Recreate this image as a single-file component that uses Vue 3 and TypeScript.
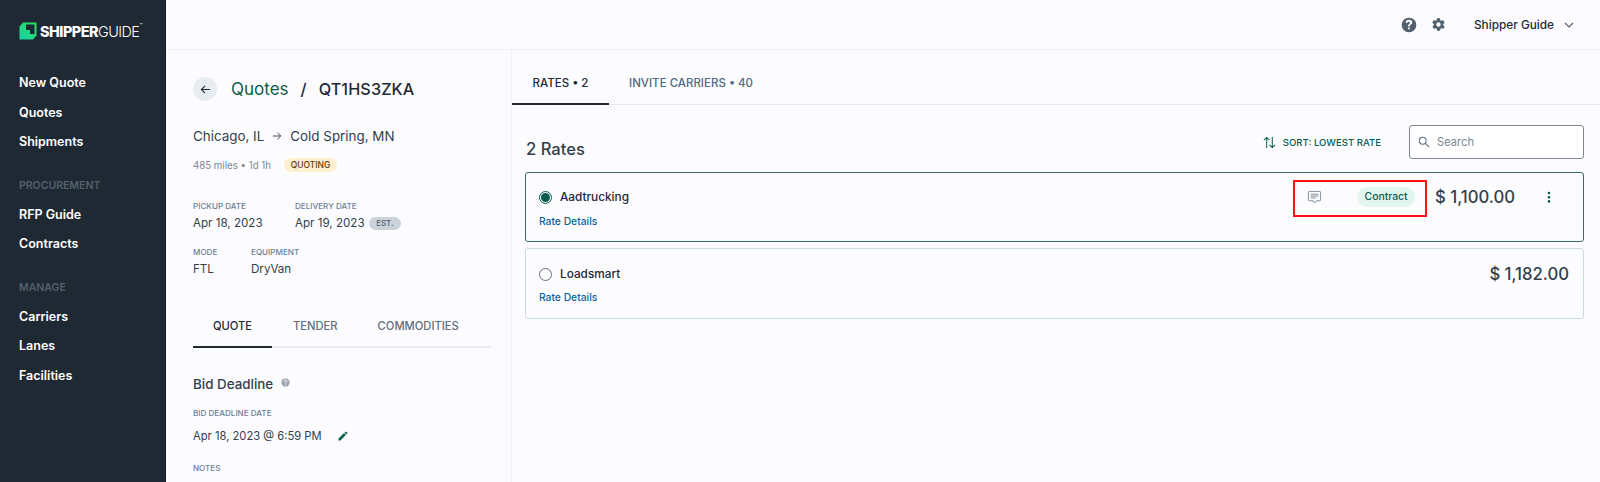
<script setup lang="ts">
const topNav: string[] = ['New Quote', 'Quotes', 'Shipments']
const procurement: string[] = ['RFP Guide', 'Contracts']
const manage: string[] = ['Carriers', 'Lanes', 'Facilities']
</script>

<template>
  <div class="app">
    <aside class="sidebar">
      <div class="logo">
        <svg class="mark" viewBox="0 0 18 18" width="18" height="18">
          <defs>
            <linearGradient id="lg" x1="0" y1="1" x2="1" y2="0">
              <stop offset="0" stop-color="#17cfa6" />
              <stop offset="1" stop-color="#2fe05a" />
            </linearGradient>
          </defs>
          <path fill="url(#lg)" d="M4 0.5h13.5v13l-3.5 4H0.5V4.5z" />
          <path fill="#1f2933" d="M7 2.5h8.5v9.5H11V8H7z" />
        </svg>
        <span class="wordmark"><b>SHIPPER</b>GUIDE</span><span class="tm">™</span>
      </div>
      <nav class="nav">
        <a v-for="n in topNav" :key="n" class="nav-item">{{ n }}</a>
        <div class="nav-head">PROCUREMENT</div>
        <a v-for="n in procurement" :key="n" class="nav-item">{{ n }}</a>
        <div class="nav-head">MANAGE</div>
        <a v-for="n in manage" :key="n" class="nav-item">{{ n }}</a>
      </nav>
    </aside>

    <div class="main">
      <header class="topbar">
        <svg class="ic-help" viewBox="0 0 24 24" width="16" height="16">
          <path fill="#52606d" fill-rule="evenodd" d="M12 1a11 11 0 1 0 0 22 11 11 0 0 0 0-22zm-1.3 17.5v-2.7h2.6v2.7zm4.6-7.6c-.5.7-1.1 1.1-1.6 1.5-.6.5-.9.9-.9 1.9h-2.5c0-1.8.7-2.7 1.7-3.4.6-.5 1.3-.9 1.3-1.8a1.9 1.9 0 0 0-3.8 0H7.1a4.9 4.9 0 0 1 9.8 0c0 .7-.3 1.3-1.6 1.8z" />
        </svg>
        <svg class="ic-gear" viewBox="0 0 24 24" width="15" height="15">
          <path fill="#52606d" fill-rule="evenodd" d="M19.4 13c.1-.3.1-.7.1-1s0-.7-.1-1l2.1-1.6c.2-.2.2-.4.1-.6l-2-3.5c-.1-.2-.4-.3-.6-.2l-2.5 1c-.5-.4-1.1-.7-1.7-1l-.4-2.7c0-.2-.2-.4-.5-.4h-4c-.3 0-.5.2-.5.4l-.4 2.7c-.6.3-1.2.6-1.7 1l-2.5-1c-.2-.1-.5 0-.6.2l-2 3.5c-.1.2-.1.4.1.6L4.6 11c-.1.3-.1.7-.1 1s0 .7.1 1l-2.1 1.6c-.2.2-.2.4-.1.6l2 3.5c.1.2.4.3.6.2l2.5-1c.5.4 1.1.7 1.7 1l.4 2.7c0 .2.2.4.5.4h4c.3 0 .5-.2.5-.4l.4-2.7c.6-.3 1.2-.6 1.7-1l2.5 1c.2.1.5 0 .6-.2l2-3.5c.1-.2.1-.4-.1-.6zM12 15.5a3.5 3.5 0 1 1 0-7 3.5 3.5 0 0 1 0 7z" />
        </svg>
        <span class="account">Shipper Guide</span>
        <svg class="ic-chev" viewBox="0 0 10 6" width="10" height="6">
          <path d="M1 1l4 4 4-4" fill="none" stroke="#52606d" stroke-width="1.1" />
        </svg>
      </header>

      <div class="body">
        <section class="left">
          <div class="crumbs">
            <button class="back" type="button">
              <svg viewBox="0 0 12 12" width="11" height="11">
                <path d="M11 6H1.5M5.5 2L1.5 6l4 4" fill="none" stroke="#1f2933" stroke-width="1.2" />
              </svg>
            </button>
            <span class="crumb-link">Quotes</span>
            <span class="crumb-sep">/</span>
            <span class="crumb-id">QT1HS3ZKA</span>
          </div>

          <div class="route">
            <span>Chicago, IL</span>
            <svg viewBox="0 0 12 12" width="10" height="10">
              <path d="M1 6h9.5M6.5 2l4 4-4 4" fill="none" stroke="#323f4b" stroke-width="1.1" />
            </svg>
            <span>Cold Spring, MN</span>
          </div>

          <div class="meta">
            <span class="meta-text">485 miles • 1d 1h</span>
            <span class="quoting">QUOTING</span>
          </div>

          <div class="facts dates">
            <div class="fact date1">
              <div class="label">PICKUP DATE</div>
              <div class="value">Apr 18, 2023</div>
            </div>
            <div class="fact">
              <div class="label">DELIVERY DATE</div>
              <div class="value">Apr 19, 2023 <span class="est">EST.</span></div>
            </div>
          </div>

          <div class="facts modes">
            <div class="fact mode1">
              <div class="label">MODE</div>
              <div class="value">FTL</div>
            </div>
            <div class="fact">
              <div class="label">EQUIPMENT</div>
              <div class="value">DryVan</div>
            </div>
          </div>

          <div class="subtabs">
            <span class="subtab active">QUOTE</span>
            <span class="subtab tender">TENDER</span>
            <span class="subtab comm">COMMODITIES</span>
          </div>

          <div class="bid-head">
            <span>Bid Deadline</span>
            <svg viewBox="0 0 24 24" width="9" height="9">
              <circle cx="12" cy="12" r="11" fill="#9aa5b1" />
              <path d="M8.5 9.5a3.5 3.5 0 1 1 5.2 3c-1.1.7-1.7 1.2-1.7 2.5M12 17v2.5" fill="none" stroke="#fff" stroke-width="2.4" />
            </svg>
          </div>
          <div class="label bid-label">BID DEADLINE DATE</div>
          <div class="bid-value">
            <span class="value">Apr 18, 2023 @ 6:59 PM</span>
            <svg viewBox="0 0 24 24" width="12" height="12">
              <path fill="#0b5c4f" d="M3 17.2V21h3.8L17.8 9.9l-3.7-3.7zM20.7 7a1 1 0 0 0 0-1.4l-2.3-2.3a1 1 0 0 0-1.4 0l-1.8 1.8 3.7 3.7z" />
            </svg>
          </div>
          <div class="label notes">NOTES</div>
        </section>

        <section class="right">
          <div class="tabs">
            <span class="tab active">RATES • 2</span>
            <span class="tab">INVITE CARRIERS • 40</span>
          </div>

          <div class="rates">
            <div class="rates-head">
              <h2>2 Rates</h2>
              <div class="sort">
                <svg viewBox="0 0 14 14" width="13" height="13">
                  <path d="M4 13V1.5M1 4.5l3-3 3 3M10 1v11.5M7 9.5l3 3 3-3" fill="none" stroke="#0b5c4f" stroke-width="1.1" />
                </svg>
                <span>SORT: LOWEST RATE</span>
              </div>
              <label class="search">
                <svg viewBox="0 0 14 14" width="12" height="12">
                  <circle cx="5.5" cy="5.5" r="4" fill="none" stroke="#616e7c" stroke-width="1.2" />
                  <path d="M8.6 8.6L13 13" stroke="#616e7c" stroke-width="1.2" />
                </svg>
                <input type="text" placeholder="Search" />
              </label>
            </div>

            <article class="card selected">
              <div class="card-row">
                <span class="radio on"><i></i></span>
                <span class="carrier">Aadtrucking</span>
                <svg class="ic-comment" viewBox="0 0 16 16" width="15" height="15">
                  <path d="M2.5 1.5h11a1 1 0 0 1 1 1v8a1 1 0 0 1-1 1H10l-2 2.5-1.5-2.5h-4a1 1 0 0 1-1-1v-8a1 1 0 0 1 1-1z" fill="none" stroke="#7b8794" stroke-width="1" />
                  <path d="M4 4.5h8M4 6.5h8M4 8.5h5" stroke="#7b8794" stroke-width="1" />
                </svg>
                <span class="contract">Contract</span>
                <span class="price first">$ 1,100.00</span>
                <svg class="ic-dots" viewBox="0 0 4 14" width="4" height="14">
                  <circle cx="2" cy="3" r="1.3" fill="#0b5c4f" />
                  <circle cx="2" cy="7.2" r="1.3" fill="#0b5c4f" />
                  <circle cx="2" cy="11.4" r="1.3" fill="#0b5c4f" />
                </svg>
              </div>
              <a class="details">Rate Details</a>
              <div class="annotation"></div>
            </article>

            <article class="card second">
              <div class="card-row">
                <span class="radio"></span>
                <span class="carrier">Loadsmart</span>
                <span class="price">$ 1,182.00</span>
              </div>
              <a class="details">Rate Details</a>
            </article>
          </div>
        </section>
      </div>
    </div>
  </div>
</template>

<style>
html, body { margin: 0; background: #fcfcff; }
</style>

<style scoped>
.app {
  display: flex;
  height: 482px;
  overflow: hidden;
  font-family: Inter, "Noto Sans", sans-serif;
  color: #1f2933;
  background: #fcfcff;
}
.sidebar {
  width: 165px;
  flex: none;
  background: #1f2933;
  border-right: 1px solid #14191f;
  color: #fff;
}
.logo {
  display: flex;
  align-items: center;
  height: 62px;
  padding-left: 19px;
}
.mark { flex: none; margin-right: 3px; }
.wordmark {
  font-size: 14.4px;
  font-weight: 300;
  letter-spacing: -0.5px;
  white-space: nowrap;
}
.wordmark b { font-weight: 800; }
.tm { font-size: 5px; align-self: flex-start; margin-top: 22px; }
.nav { display: flex; flex-direction: column; padding: 6px 0 0 19px; }
.nav-item {
  height: 29.5px;
  line-height: 29.5px;
  font-size: 12.5px;
  font-weight: 600;
  color: #fff;
}
.nav-head {
  height: 13px;
  line-height: 13px;
  margin: 22px 0 8px;
  font-size: 10.5px;
  font-weight: 600;
  color: #52606d;
}
.main { flex: 1; display: flex; flex-direction: column; min-width: 0; }
.topbar {
  height: 49px;
  flex: none;
  border-bottom: 1px solid #eef1f5;
  display: flex;
  align-items: center;
  justify-content: flex-end;
  padding-right: 26px;
}
.ic-help { margin-right: 14px; }
.ic-gear { margin-right: 28px; }
.account { font-size: 11.8px; font-weight: 500; margin-right: 10px; }
.body { flex: 1; display: flex; min-height: 0; }
.left {
  width: 346px;
  box-sizing: border-box;
  flex: none;
  padding: 0 20px 0 27px;
  border-right: 1px solid #eef1f5;
  overflow: hidden;
}
.crumbs { display: flex; align-items: center; height: 24px; margin-top: 27px; }
.back {
  width: 24px;
  height: 24px;
  padding: 0;
  border: 0;
  border-radius: 50%;
  background: #e8edf2;
  display: flex;
  align-items: center;
  justify-content: center;
  margin-right: 14px;
}
.crumb-link { font-size: 17px; color: #0b5c4f; }
.crumb-sep { font-size: 16.5px; margin: 0 12px 0 12px; font-weight: 500; }
.crumb-id { font-size: 16.2px; font-weight: 500; letter-spacing: 0.1px; }
.route {
  display: flex;
  align-items: center;
  gap: 8px;
  margin-top: 25px;
  height: 20px;
  font-size: 13.4px;
  color: #323f4b;
}
.meta {
  display: flex;
  align-items: center;
  margin-top: 12px;
  height: 14px;
  color: #7b8794;
}
.meta-text { width: 77px; font-size: 9.7px; white-space: nowrap; }
.quoting {
  margin-left: 14px;
  width: 53px;
  height: 14px;
  line-height: 14px;
  border-radius: 7px;
  background: #fdf0cf;
  color: #6b3a0a;
  font-size: 8.5px;
  font-weight: 500;
  text-align: center;
}
.facts { display: flex; }
.dates { margin-top: 28px; }
.modes { margin-top: 14px; }
.date1 { width: 102px; }
.mode1 { width: 58px; }
.label {
  height: 12px;
  line-height: 12px;
  font-size: 8.1px;
  font-weight: 500;
  color: #6b7f95;
  white-space: nowrap;
}
.value {
  margin-top: 3px;
  line-height: 17px;
  font-size: 11.6px;
  color: #323f4b;
  white-space: nowrap;
}
.est {
  display: inline-block;
  width: 32px;
  height: 13px;
  line-height: 13px;
  margin-left: 1px;
  border-radius: 7px;
  background: #cbd2d9;
  font-size: 8px;
  font-weight: 500;
  text-align: center;
  vertical-align: 1px;
  color: #52606d;
}
.subtabs {
  display: flex;
  margin-top: 29px;
  height: 39px;
  border-bottom: 2px solid #e8edf2;
  font-size: 11.2px;
  font-weight: 500;
  color: #616e7c;
}
.subtab { line-height: 38px; height: 39px; }
.subtab.active {
  width: 79px;
  text-align: center;
  color: #1f2933;
  border-bottom: 2px solid #1f2933;
}
.tender { margin-left: 21px; }
.comm { margin-left: 40px; }
.bid-head {
  display: flex;
  align-items: center;
  gap: 8px;
  margin-top: 26px;
  height: 20px;
  font-size: 13.4px;
  font-weight: 500;
  color: #323f4b;
}
.bid-head svg { margin-top: -3px; }
.bid-label { margin-top: 13px; }
.bid-value { display: flex; align-items: center; gap: 15px; margin-top: 8px; height: 18px; }
.bid-value .value { margin-top: 0; font-size: 11.2px; }
.notes { margin-top: 17px; }
.right { flex: 1; min-width: 0; }
.tabs {
  display: flex;
  height: 55px;
  box-sizing: border-box;
  border-bottom: 1px solid #e4e9ee;
  font-size: 11.5px;
  font-weight: 500;
  color: #52697f;
}
.tab { padding: 0 20px; line-height: 66px; height: 55px; box-sizing: border-box; white-space: nowrap; }
.tab.active {
  width: 97px;
  padding: 0;
  text-align: center;
  color: #1f2933;
  border-bottom: 2px solid #1f2933;
}
.rates { padding: 0 16px 0 13px; }
.rates-head { display: flex; align-items: center; height: 67px; }
.rates-head h2 {
  margin: 20px auto 0 1px;
  font-size: 16.6px;
  font-weight: 500;
  color: #323f4b;
}
.sort {
  display: flex;
  align-items: center;
  gap: 7px;
  margin-right: 28px;
  margin-top: 7px;
  font-size: 9.6px;
  font-weight: 500;
  color: #0b5c4f;
}
.search {
  display: flex;
  align-items: center;
  gap: 7px;
  width: 175px;
  height: 34px;
  box-sizing: border-box;
  padding-left: 8px;
  margin-top: 7px;
  border: 1px solid #7b8794;
  border-radius: 3px;
  background: #fff;
}
.search input {
  border: 0;
  outline: 0;
  width: 120px;
  padding: 0;
  font: 11.2px Inter, sans-serif;
  background: transparent;
}
.search input::placeholder { color: #7b8794; opacity: 1; }
.card {
  position: relative;
  height: 70px;
  box-sizing: border-box;
  padding: 13px 14px 0 13px;
  border: 1px solid #cbd9e3;
  border-radius: 3px;
}
.card.selected { border-color: #3d6a66; }
.second { margin-top: 6px; height: 71px; padding-top: 14px; }
.card-row { display: flex; align-items: center; height: 22px; }
.radio {
  flex: none;
  width: 13px;
  height: 13px;
  border: 1px solid #616e7c;
  border-radius: 50%;
  display: flex;
  align-items: center;
  justify-content: center;
  margin-right: 8px;
  box-sizing: border-box;
}
.radio.on { border-color: #0b5c4f; }
.radio.on i { width: 9px; height: 9px; border-radius: 50%; background: #0b5c4f; }
.carrier { font-size: 11.8px; font-weight: 500; margin-right: auto; }
.price { font-size: 16.7px; font-weight: 500; color: #323f4b; white-space: nowrap; }
.price.first { margin-right: 32px; }
.ic-comment { margin-right: 35px; }
.contract {
  width: 58px;
  height: 20px;
  line-height: 20px;
  border-radius: 10px;
  background: #e3f6ee;
  color: #0b5c4f;
  font-size: 10.4px;
  font-weight: 500;
  text-align: center;
  margin-right: 20px;
}
.ic-dots { margin-right: 18px; }
.details {
  display: block;
  margin-top: 7px;
  font-size: 10.3px;
  font-weight: 500;
  color: #0f5f9e;
}
.second .details { margin-top: 6px; }
.annotation {
  position: absolute;
  left: 767px;
  top: 7px;
  width: 134px;
  height: 37px;
  box-sizing: border-box;
  border: 2px solid #f11;
}
</style>
